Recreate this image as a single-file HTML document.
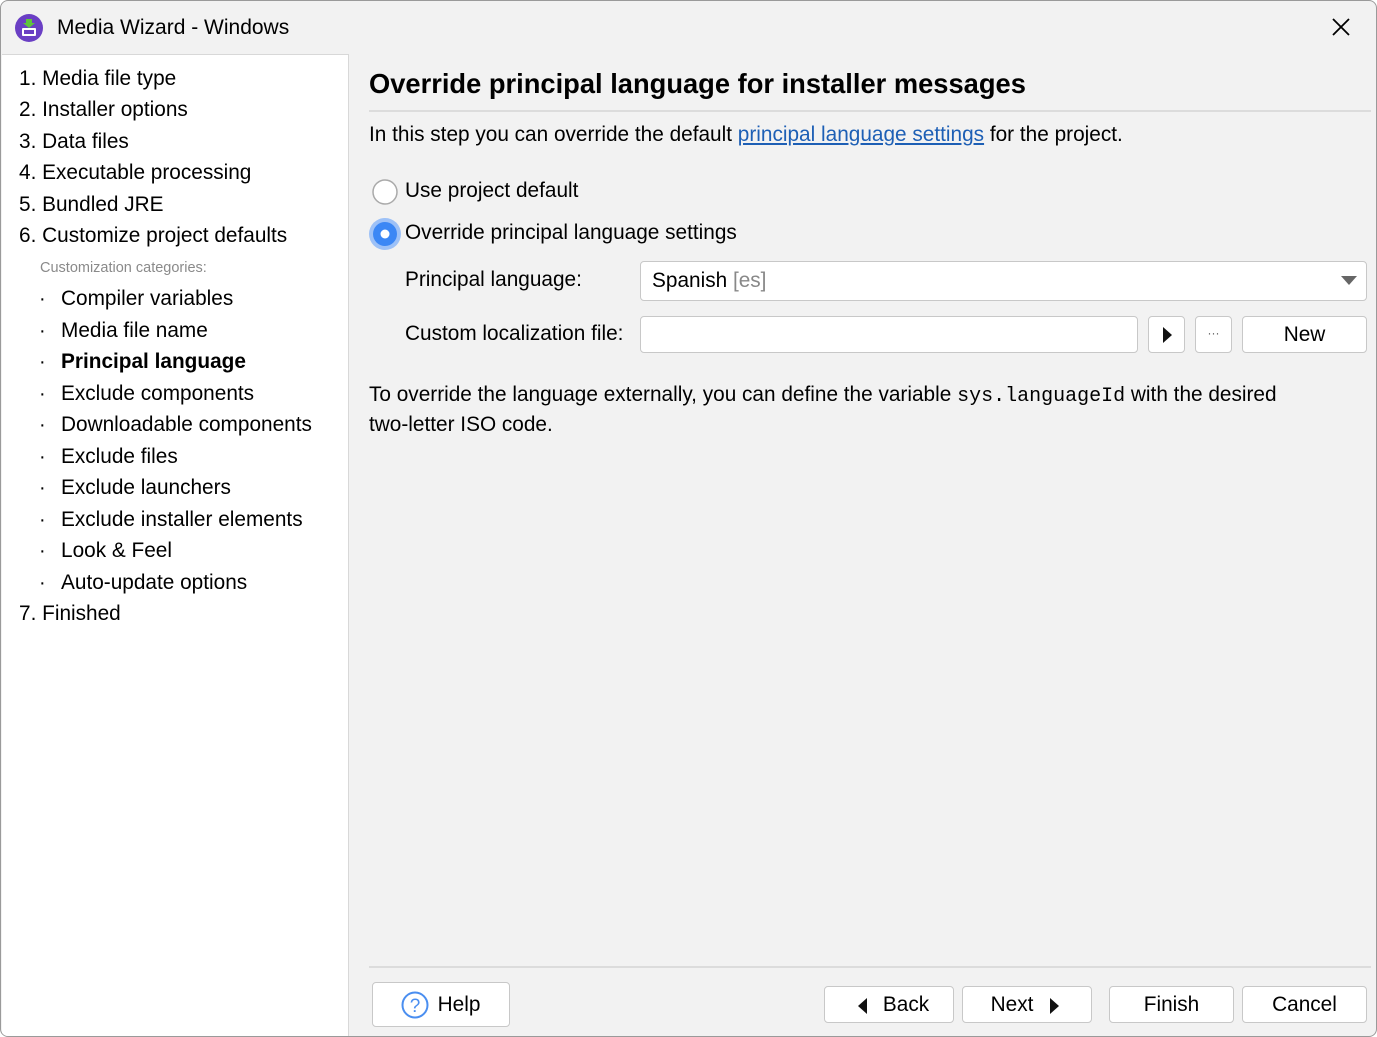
<!DOCTYPE html>
<html><head><meta charset="utf-8"><style>
*{margin:0;padding:0;box-sizing:border-box}
body{width:1377px;height:1037px;background:#fff;font-family:"Liberation Sans",sans-serif;color:#000;position:relative;overflow:hidden}
.win{position:absolute;left:0;top:0;width:1377px;height:1037px;border:1px solid #9a9a9a;border-radius:8px;background:#f2f2f2;overflow:hidden}
.title{position:absolute;left:56px;top:15px;font-size:21px}
.left{position:absolute;left:1px;top:53px;width:347px;height:983px;background:#fff;border-top:1px solid #d8d8d8;border-right:1px solid #d8d8d8}
.t{position:absolute;font-size:20.8px;white-space:nowrap}
.d{position:absolute;left:37px;font-size:20px}
h1{position:absolute;left:368px;top:67px;font-size:27.3px;font-weight:bold;white-space:nowrap}
.hr{position:absolute;left:368px;width:1002px;height:2px;background:#dcdcdc}
.box{position:absolute;background:#fff;border:1px solid #c8c8c8;border-radius:4px}
.btn{position:absolute;background:#fff;border:1px solid #c8c8c8;border-radius:4px;font-size:20.8px;text-align:center;line-height:36px}
</style></head><body><div class="win">
<svg style="position:absolute;left:14px;top:13px" width="28" height="28" viewBox="0 0 28 28"><circle cx="14" cy="14" r="14" fill="#6a3fc4"/><rect x="7" y="14" width="14" height="8" rx="1" fill="#fff"/><rect x="9" y="16" width="10" height="4" fill="#6a3fc4"/><path d="M11 5h6v4h3l-6 5-6-5h3z" fill="#5fc43c"/></svg>
<div class="title">Media Wizard - Windows</div>
<svg style="position:absolute;left:1330px;top:16px" width="20" height="20"><path d="M2 2L18 18M18 2L2 18" stroke="#000" stroke-width="1.8"/></svg>
<div class="left">
<div class="t" style="left:17px;top:12px">1. Media file type</div>
<div class="t" style="left:17px;top:43px">2. Installer options</div>
<div class="t" style="left:17px;top:75px">3. Data files</div>
<div class="t" style="left:17px;top:106px">4. Executable processing</div>
<div class="t" style="left:17px;top:138px">5. Bundled JRE</div>
<div class="t" style="left:17px;top:169px">6. Customize project defaults</div>
<div class="t" style="left:38px;top:205px;font-size:14.5px;color:#8a8a8a">Customization categories:</div>
<div class="t" style="left:59px;top:232px">Compiler variables</div>
<div class="t" style="left:59px;top:264px">Media file name</div>
<div class="t" style="left:59px;top:295px;font-weight:bold">Principal language</div>
<div class="t" style="left:59px;top:327px">Exclude components</div>
<div class="t" style="left:59px;top:358px">Downloadable components</div>
<div class="t" style="left:59px;top:390px">Exclude files</div>
<div class="t" style="left:59px;top:421px">Exclude launchers</div>
<div class="t" style="left:59px;top:453px">Exclude installer elements</div>
<div class="t" style="left:59px;top:484px">Look &amp; Feel</div>
<div class="t" style="left:59px;top:516px">Auto-update options</div>
<div class="d" style="top:233px">·</div><div class="d" style="top:265px">·</div><div class="d" style="top:296px">·</div><div class="d" style="top:328px">·</div><div class="d" style="top:359px">·</div><div class="d" style="top:391px">·</div><div class="d" style="top:422px">·</div><div class="d" style="top:454px">·</div><div class="d" style="top:485px">·</div><div class="d" style="top:517px">·</div>
<div class="t" style="left:17px;top:547px">7. Finished</div>
</div>
<h1>Override principal language for installer messages</h1>
<div class="hr" style="top:109px"></div>
<div class="t" style="left:368px;top:122px">In this step you can override the default <span style="color:#1d5fb5;text-decoration:underline">principal language settings</span> for the project.</div>
<svg style="position:absolute;left:370px;top:177px" width="28" height="28"><circle cx="14" cy="14" r="12" fill="#fff" stroke="#aaa" stroke-width="1.5"/></svg>
<div class="t" style="left:404px;top:178px">Use project default</div>
<svg style="position:absolute;left:367px;top:216px" width="34" height="34"><circle cx="17" cy="17" r="16" fill="#9dc1f7"/><circle cx="17" cy="17" r="12" fill="#3b87f5"/><circle cx="17" cy="17" r="4.5" fill="#fff"/></svg>
<div class="t" style="left:404px;top:220px">Override principal language settings</div>
<div class="t" style="left:404px;top:267px">Principal language:</div>
<div class="box" style="left:639px;top:260px;width:727px;height:40px"><span class="t" style="left:11px;top:7px">Spanish <span style="color:#888">[es]</span></span>
<svg style="position:absolute;left:700px;top:14px" width="16" height="10"><path d="M0 0H16L8 9z" fill="#666"/></svg></div>
<div class="t" style="left:404px;top:321px">Custom localization file:</div>
<div class="box" style="left:639px;top:315px;width:498px;height:37px"></div>
<div class="btn" style="left:1147px;top:315px;width:37px;height:37px"><svg style="position:absolute;left:14px;top:10px" width="10" height="16"><path d="M0 0L9 8L0 16z" fill="#111"/></svg></div>
<div class="btn" style="left:1194px;top:315px;width:37px;height:37px;font-size:12px;line-height:32px;color:#555">···</div>
<div class="btn" style="left:1241px;top:315px;width:125px;height:37px;line-height:35px">New</div>
<div class="t" style="left:368px;top:382px">To override the language externally, you can define the variable <span style="font-family:'Liberation Mono',monospace;font-size:20px">sys.languageId</span> with the desired</div>
<div class="t" style="left:368px;top:412px">two-letter ISO code.</div>
<div class="hr" style="top:965px"></div>
<div class="btn" style="left:371px;top:981px;width:138px;height:45px;line-height:43px;padding-left:36px">Help<svg style="position:absolute;left:28px;top:8px" width="28" height="28"><circle cx="14" cy="14" r="12.5" fill="#fff" stroke="#4a8ef0" stroke-width="2"/><text x="14" y="21" text-anchor="middle" font-size="19" fill="#4a8ef0" font-family="Liberation Sans">?</text></svg></div>
<div class="btn" style="left:823px;top:985px;width:130px;height:37px;line-height:35px;padding-left:34px">Back<svg style="position:absolute;left:33px;top:11px" width="10" height="16"><path d="M9 0L0 8L9 16z" fill="#111"/></svg></div>
<div class="btn" style="left:961px;top:985px;width:130px;height:37px;line-height:35px;padding-right:30px">Next<svg style="position:absolute;left:87px;top:11px" width="10" height="16"><path d="M0 0L9 8L0 16z" fill="#111"/></svg></div>
<div class="btn" style="left:1108px;top:985px;width:125px;height:37px;line-height:35px">Finish</div>
<div class="btn" style="left:1241px;top:985px;width:125px;height:37px;line-height:35px">Cancel</div>
</div></body></html>
